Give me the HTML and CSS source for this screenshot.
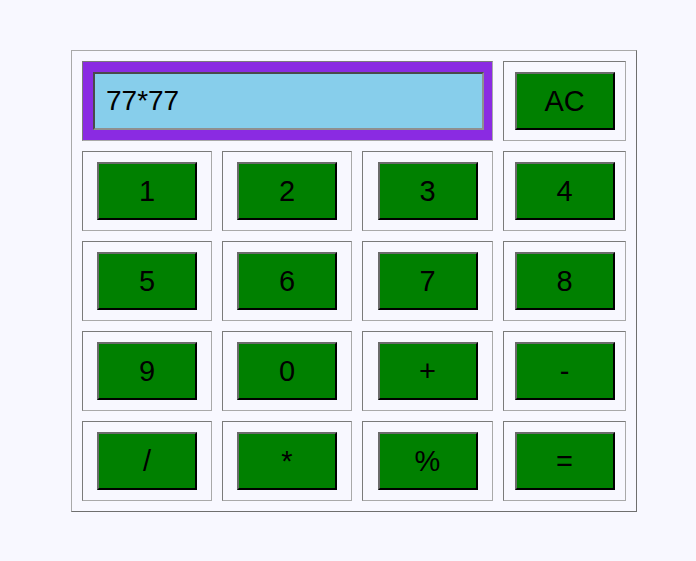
FILE: index.html
```html
<!DOCTYPE html>
<html>
<head>
    <title>Calculator</title>
    <link rel="stylesheet" href="styles.css">
</head>
<body>
    <table class="calculator">
        <colgroup>
            <col class="col-a">
            <col class="col-b">
            <col class="col-c">
            <col class="col-d">
        </colgroup>
        <tr>
            <td colspan="3" class="display-cell">
                <input type="text" class="display" id="display" value="77*77" readonly>
            </td>
            <td><button class="key">AC</button></td>
        </tr>
        <tr>
            <td><button class="key">1</button></td>
            <td><button class="key">2</button></td>
            <td><button class="key">3</button></td>
            <td><button class="key">4</button></td>
        </tr>
        <tr>
            <td><button class="key">5</button></td>
            <td><button class="key">6</button></td>
            <td><button class="key">7</button></td>
            <td><button class="key">8</button></td>
        </tr>
        <tr>
            <td><button class="key">9</button></td>
            <td><button class="key">0</button></td>
            <td><button class="key">+</button></td>
            <td><button class="key">-</button></td>
        </tr>
        <tr>
            <td><button class="key">/</button></td>
            <td><button class="key">*</button></td>
            <td><button class="key">%</button></td>
            <td><button class="key">=</button></td>
        </tr>
    </table>
</body>
</html>
```

FILE: styles.css
```css
body {
    margin: 0;
    padding: 50px 0 0 71px;
    background-color: #f8f8ff;
    font-family: 'Liberation Sans', Arial, sans-serif;
}

.calculator {
    table-layout: fixed;
    width: 566px;
    border-collapse: separate;
    border-spacing: 10px;
    background-color: #f8f8ff;
    border: 1px solid;
    border-color: #a9a9a9 #6f6f6f #6f6f6f #a9a9a9;
}

.col-a, .col-b {
    width: 130px;
}

.col-c {
    width: 131px;
}

.col-d {
    width: 123px;
}

.calculator td {
    box-sizing: border-box;
    height: 80px;
    padding: 0;
    text-align: center;
    vertical-align: middle;
    border: 1px solid;
    border-color: #7a7a7a #a9a9a9 #a9a9a9 #7a7a7a;
}

.calculator td.display-cell {
    background-color: #8a2be2;
    text-align: left;
    padding-left: 10px;
}

.display {
    box-sizing: border-box;
    display: block;
    width: 391px;
    height: 58px;
    margin: 0;
    padding: 0 11px;
    background-color: #87ceeb;
    border: 2px solid;
    border-color: #4a4a4a #8f8f8f #8f8f8f #4a4a4a;
    font-family: 'Liberation Sans', Arial, sans-serif;
    font-size: 28px;
    color: #000;
    outline: none;
}

.key {
    box-sizing: border-box;
    width: 100px;
    height: 58px;
    margin: 0;
    padding: 0;
    background-color: #008000;
    border: 2px solid;
    border-color: #6b6b6b #000 #000 #6b6b6b;
    font-family: 'Liberation Sans', Arial, sans-serif;
    font-size: 29px;
    color: #000;
    cursor: pointer;
}
```
